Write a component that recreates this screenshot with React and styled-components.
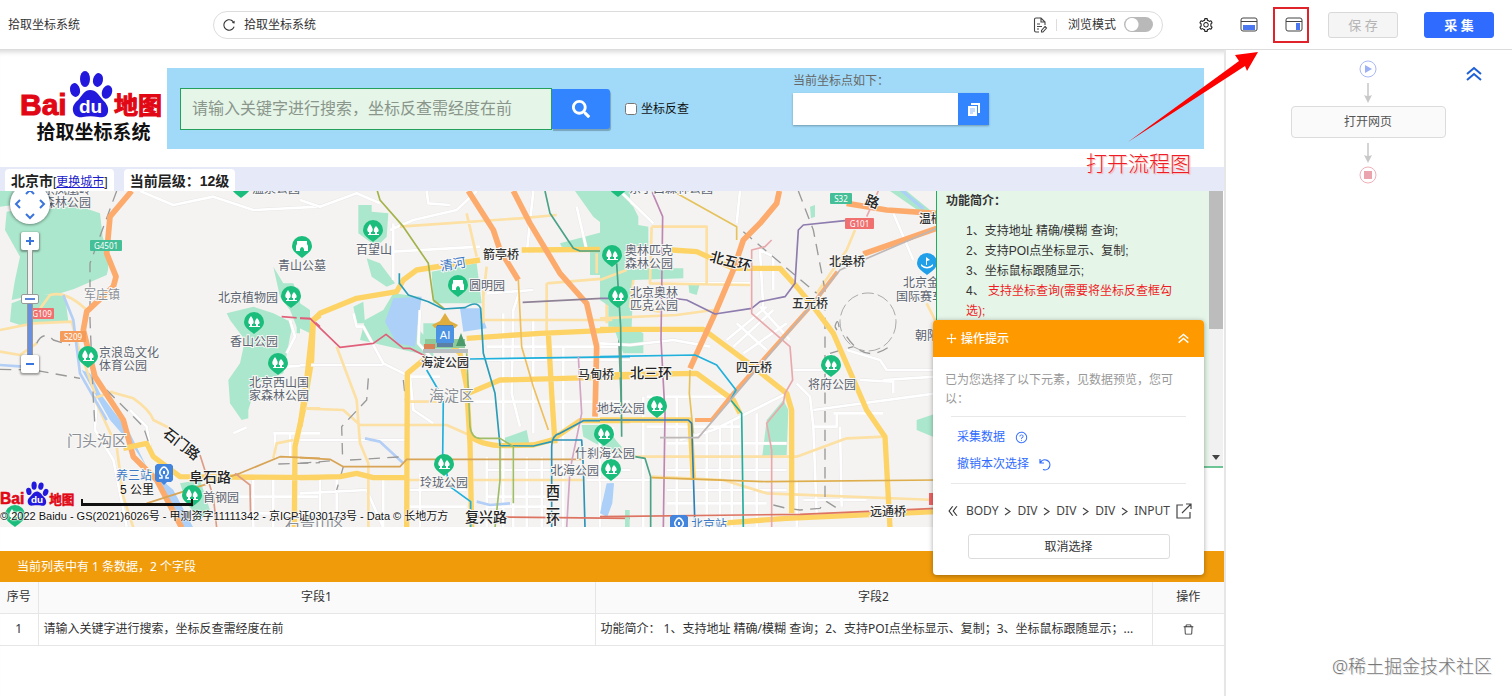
import React from "react";
import styled, { createGlobalStyle, css } from "styled-components";
import {
  AiOutlineReload,
  AiOutlineSetting,
  AiOutlineDelete,
  AiOutlineQuestionCircle,
  AiOutlineDrag,
  AiOutlineDoubleLeft,
} from "react-icons/ai";
import { FaSearch } from "react-icons/fa";

const ui = `"Noto Sans", "Noto Sans CJK SC", sans-serif`;
const arial = `"Liberation Sans", "Noto Sans CJK SC", sans-serif`;

const GlobalStyle = createGlobalStyle`
  *, *::before, *::after { box-sizing: border-box; }
  body { margin: 0; font: 12px/20px ${ui}; color: #333; background: #fff; }
  button, input { font: inherit; color: inherit; }
  button { cursor: pointer; }
`;

const Screen = styled.div`
  position: relative;
  display: flex;
  flex-direction: column;
  min-height: 100vh;
  overflow: hidden;
`;

/* ---------- header ---------- */

const Header = styled.header`
  position: relative;
  z-index: 3;
  display: flex;
  align-items: center;
  height: 50px;
  padding: 0 18px 0 8px;
  background: #fff;
  border-bottom: 1px solid #dcdcdc;
`;

const PageTitle = styled.div`
  width: 205px;
`;

const AddressBar = styled.div`
  flex: 1;
  display: flex;
  align-items: center;
  height: 28px;
  padding: 0 9px 0 8px;
  border: 1px solid #dcdcdc;
  border-radius: 14px;
`;

const PlainButton = styled.button`
  display: inline-flex;
  align-items: center;
  justify-content: center;
  padding: 0;
  border: 0;
  background: none;
`;

const Address = styled.input`
  flex: 1;
  min-width: 0;
  margin-left: 8px;
  padding: 0;
  border: 0;
  outline: 0;
  background: none;
`;

const Separator = styled.span`
  width: 1px;
  height: 12px;
  margin: 0 11px 0 8px;
  background: #ddd;
`;

const SwitchLabel = styled.label`
  display: flex;
  align-items: center;
  gap: 8px;
`;

const Switch = styled.input`
  appearance: none;
  width: 29px;
  height: 15px;
  margin: 0;
  border-radius: 8px;
  background: radial-gradient(circle at 8px 50%, #fff 6px, #b9b9b9 7px);
`;

const ToolButton = styled(PlainButton)`
  width: ${(p) => p.$w}px;
  height: 36px;
  margin-left: ${(p) => p.$gap}px;
  ${(p) => p.$marked && css`
    padding-left: 6px;
    border: 2px solid #e0222a;
  `}
`;

const ActionButton = styled.button`
  width: 70px;
  height: 26px;
  margin-left: ${(p) => (p.$primary ? 26 : 19)}px;
  padding: 0;
  border: 1px solid ${(p) => (p.$primary ? "#2f6bff" : "#d9d9d9")};
  border-radius: 3px;
  background: ${(p) => (p.$primary ? "#2f6bff" : "#f5f5f5")};
  color: ${(p) => (p.$primary ? "#fff" : "#b4b4b4")};
  font-size: 13px;
  font-weight: ${(p) => (p.$primary ? 700 : 400)};
  line-height: 24px;
`;

/* ---------- body ---------- */

const Body = styled.div`
  flex: 1;
  display: flex;
`;

const Workspace = styled.main`
  position: relative;
  flex: 1;
  min-width: 0;
  box-shadow: inset 0 6px 5px -4px #d8d8d8;
`;

const FlowPanel = styled.aside`
  position: relative;
  width: 288px;
  padding: 10px 2px 0 0;
  border-left: 2px solid #e6e6e6;
  display: flex;
  flex-direction: column;
  align-items: center;
`;

const FlowNode = styled.button`
  width: 155px;
  height: 32px;
  border: 1px solid #dcdcdc;
  border-radius: 4px;
  background: #fafafa;
  color: #555;
`;

const CollapseButton = styled(PlainButton)`
  position: absolute;
  top: 16px;
  right: 30px;
  color: #1d5fd6;
`;

const Brand = styled.section`
  display: flex;
  align-items: flex-start;
  height: 117px;
  padding: 18px 20px 0;
  font-family: ${arial};
`;

const BrandLogo = styled.h1`
  width: 147px;
  margin: 0;
  padding-top: 3px;
  font-size: 19px;
  line-height: 24px;
  font-weight: 700;
  color: #111;
  text-align: center;
  svg { display: block; margin-bottom: 2px; }
`;

const SearchBanner = styled.form`
  flex: 1;
  display: flex;
  align-items: center;
  height: 81px;
  padding: 0 13px;
  background: #a0daf8;
`;

const Keyword = styled.input`
  width: 372px;
  height: 42px;
  padding: 0 11px;
  border: 1px solid #23a05c;
  background: #e5f5e7;
  font-size: 16px;
  outline: 0;
  &::placeholder { color: #8a958c; opacity: 1; }
`;

const SearchButton = styled(PlainButton)`
  width: 58px;
  height: 40px;
  border-radius: 0 3px 3px 0;
  background: #3385ff;
  color: #fff;
  box-shadow: 1px 2px 1px rgba(0, 0, 0, 0.25);
`;

const ReverseLabel = styled.label`
  display: flex;
  align-items: center;
  gap: 4px;
  width: 168px;
  margin-left: 15px;
  color: #111;
  input { width: 12px; height: 12px; margin: 0; }
`;

const PointField = styled.div`
  align-self: flex-start;
  padding-top: 3px;
  label { display: block; height: 22px; color: #666; }
`;

const PointRow = styled.div`
  display: flex;
  width: 196px;
  height: 32px;
  box-shadow: 0 1px 2px rgba(0, 0, 0, 0.3);
  input { flex: 1; min-width: 0; border: 0; background: #fff; }
  button { width: 31px; background: #3385ff; }
`;

const StatusStrip = styled.div`
  display: flex;
  align-items: flex-end;
  gap: 10px;
  height: 24px;
  padding-left: 5px;
  background: #e5e9f8;
  font-family: ${arial};
`;

const StatusTab = styled.div`
  height: 22px;
  padding: 0 6px;
  border-radius: 4px 4px 0 0;
  background: #fff;
  font-size: 14px;
  line-height: 24px;
  font-weight: 700;
  color: #222;
  span { font-size: 12px; font-weight: 400; }
  a { color: #1a1acb; }
`;

const MapRow = styled.div`
  display: flex;
  height: 360px;
  font-family: ${arial};
`;

const MapFrame = styled.div`
  position: relative;
  flex: 1;
  height: 336px;
  overflow: hidden;
  background: #f4f3f1;
`;

const MapDrawing = styled.svg`
  display: block;
  width: 100%;
  height: 100%;
`;

const PanWheel = styled.div`
  position: absolute;
  left: 10px;
  top: -7px;
  display: grid;
  grid-template-columns: repeat(3, 1fr);
  grid-template-rows: repeat(3, 1fr);
  width: 40px;
  height: 40px;
  padding: 2px;
  border-radius: 20px;
  background: #fff;
  box-shadow: 0 0 3px 1px rgba(0, 0, 0, 0.4);
  button:nth-child(1) { grid-area: 1 / 2; }
  button:nth-child(2) { grid-area: 2 / 1; }
  button:nth-child(3) { grid-area: 2 / 3; }
  button:nth-child(4) { grid-area: 3 / 2; }
`;

const Zoomer = styled.div`
  position: absolute;
  left: 21px;
  top: 41px;
  display: flex;
  flex-direction: column;
  align-items: center;
  width: 18px;
`;

const ZoomStep = styled(PlainButton)`
  width: 18px;
  height: 18px;
  border-radius: 2px;
  background: #fff;
  box-shadow: 0 1px 2px 1px rgba(0, 0, 0, 0.35);
`;

const ZoomRange = styled.input`
  appearance: none;
  writing-mode: vertical-lr;
  direction: rtl;
  width: 18px;
  height: 105px;
  margin: 0;
  background: linear-gradient(#f4f3f1 0 50%, #6a8fdc 50%) center / 5px 100% no-repeat;
  &::-webkit-slider-runnable-track {
    width: 18px;
    background: linear-gradient(90deg, transparent 6px, #999 6px 7px, transparent 7px 11px, #999 11px 12px, transparent 12px);
  }
  &::-webkit-slider-thumb {
    appearance: none;
    width: 18px;
    height: 10px;
    border: 1px solid #999;
    border-radius: 2px;
    background: linear-gradient(#5b83d8, #5b83d8) center / 10px 2px no-repeat #fff;
  }
`;

const MapFooter = styled.div`
  position: absolute;
  left: 0;
  bottom: 2px;
  color: #111;
  line-height: 18px;
  white-space: nowrap;
  small {
    display: block;
    font-size: 11px;
    text-shadow: 0 0 2px #fff, 0 0 2px #fff, 0 0 2px #fff;
  }
`;

const FooterTop = styled.div`
  display: flex;
  align-items: flex-end;
  gap: 6px;
`;

const ScaleBar = styled.div`
  display: flex;
  flex-direction: column;
  width: 112px;
  margin-bottom: 1px;
  text-align: center;
  line-height: 17px;
  text-shadow: 0 0 2px #fff, 0 0 2px #fff;
  &::after {
    content: "";
    height: 7px;
    border: solid #111;
    border-width: 0 2px 3px;
  }
`;

const Intro = styled.section`
  display: flex;
  width: 287px;
  height: 277px;
  margin-right: 1px;
  border-left: 1px solid #1fae5d;
  border-bottom: 2px solid #6dc494;
  background: #e5f5e7;
`;

const IntroText = styled.div`
  flex: 1;
  padding: 0 28px 0 9px;
  h2 { margin: 0 0 10px; font-size: 12px; line-height: 20px; }
  ol { margin: 0; padding: 0 0 0 20px; list-style: none; }
  em { color: #ee1c25; font-style: normal; }
`;

const ScrollTrack = styled.div`
  display: flex;
  flex-direction: column;
  justify-content: space-between;
  align-items: center;
  width: 14px;
  padding-bottom: 6px;
  background: #f1f1f1;
  &::before { content: ""; width: 14px; height: 138px; background: #bcbcbc; }
  &::after { content: ""; border: 4px solid transparent; border-top: 5px solid #444; border-bottom: 0; }
`;

/* ---------- data preview ---------- */

const DataTitle = styled.div`
  height: 31px;
  padding-left: 17px;
  line-height: 31px;
  color: #fff;
  background: #f09b0a;
`;

const DataTable = styled.table`
  width: 100%;
  table-layout: fixed;
  border-collapse: collapse;
  line-height: 20px;
  th, td {
    height: 32px;
    padding: 0 5px;
    border-bottom: 1px solid #e6e6e6;
    font-weight: 400;
    text-align: left;
    vertical-align: middle;
    white-space: nowrap;
    overflow: hidden;
  }
  th + th, td + td { border-left: 1px solid #e6e6e6; }
  th { height: 31px; background: #fafafa; text-align: center; }
  td:first-child, td:last-child { text-align: center; }
  button { vertical-align: middle; }
`;

/* ---------- operation tips ---------- */

const Tips = styled.section`
  position: absolute;
  z-index: 2;
  top: 270px;
  right: 20px;
  width: 271px;
  height: 255px;
  border-radius: 4px;
  background: #fff;
  box-shadow: 0 1px 5px rgba(0, 0, 0, 0.35);
`;

const TipsHeader = styled.header`
  display: flex;
  align-items: center;
  gap: 3px;
  height: 37px;
  padding: 0 15px 0 12px;
  border-radius: 4px 4px 0 0;
  background: #ff9900;
  color: #fff;
  h2 { flex: 1; margin: 0; font-size: 12px; font-weight: 500; }
`;

const TipsMessage = styled.p`
  margin: 0;
  padding: 13px 24px 8px 12px;
  line-height: 19px;
  color: #999;
`;

const TipsActions = styled.div`
  display: flex;
  flex-direction: column;
  align-items: flex-start;
  gap: 7px;
  margin: 0 18px;
  padding: 10px 6px 9px;
  border: solid #e8e8e8;
  border-width: 1px 0;
  a { display: flex; align-items: center; gap: 10px; color: #2f6bff; text-decoration: none; }
`;

const Crumbs = styled.nav`
  display: flex;
  align-items: center;
  justify-content: space-between;
  height: 20px;
  margin: 17px 12px 13px 13px;
  a { color: #444; text-decoration: none; }
`;

const CancelButton = styled.button`
  display: block;
  width: 202px;
  height: 25px;
  margin: 0 auto;
  padding: 0;
  border: 1px solid #dcdcdc;
  border-radius: 3px;
  background: #fff;
`;

/* ---------- annotations lying over the page ---------- */

const Arrow = styled.svg`
  position: absolute;
  z-index: 5;
  top: 50px;
  right: 252px;
`;

const ArrowNote = styled.div`
  position: absolute;
  z-index: 5;
  top: 148px;
  right: 321px;
  font-size: 21px;
  line-height: 30px;
  font-weight: 300;
  color: #ee1c25;
  text-shadow: 0 0 2px #fff, 1px 1px 1px #f7a0a0;
`;

const Watermark = styled.div`
  position: absolute;
  right: 20px;
  bottom: 16px;
  font-size: 18px;
  line-height: 28px;
  font-weight: 300;
  color: #777;
  text-shadow: 1px 1px 0 #e4e4e4;
`;

/* ---------- drawings ---------- */

function BaiduLogo({ width, height }) {
  return (
    <svg width={width} height={height} viewBox="0 0 143 48" overflow="visible" role="img" aria-label="Bai du 地图">
      <g fontFamily={arial} fontWeight="700" fill="#e10714" stroke="#e10714" strokeWidth="1">
        <text x="0" y="44" fontSize="30">Bai</text>
        <text x="94" y="43" fontSize="24">地图</text>
      </g>
      <g fill="#2319dc">
        <ellipse cx="65" cy="8" rx="5" ry="8" />
        <ellipse cx="78" cy="9" rx="5" ry="7" transform="rotate(12 78 9)" />
        <ellipse cx="55" cy="19" rx="5" ry="7" transform="rotate(-12 55 19)" />
        <ellipse cx="87" cy="21" rx="5" ry="7" transform="rotate(20 87 21)" />
        <path d="M70 19c6 0 9 5 12 9 3 3 7 7 6 13-1 5-6 6-10 5-5-1-10-1-15 0-5 1-9-1-10-6-1-6 3-9 6-12 3-4 6-9 11-9z" />
      </g>
      <text x="59" y="42" fontSize="19" fontWeight="700" fontFamily={arial} fill="#fff">du</text>
    </svg>
  );
}

function PaneIcon({ side }) {
  return (
    <svg width="18" height="15" viewBox="0 0 18 15" fill="none" aria-hidden="true">
      <rect x="1" y="1" width="16" height="13" rx="2" stroke="#444" />
      <path d="M1 4.500H17" stroke="#444" />
      {side ? <rect x="11" y="6" width="4" height="7" fill="#4b78f0" /> : <rect x="3" y="8" width="12" height="5" fill="#4b78f0" />}
    </svg>
  );
}

function DocEditIcon() {
  return (
    <svg width="15" height="16" viewBox="0 0 15 16" fill="none" stroke="#444" strokeWidth="1.100" aria-hidden="true">
      <path d="M6 15H3a1.500 1.500 0 0 1-1.500-1.500v-11A1.500 1.500 0 0 1 3 1h5l4 4v3M8 1v4h4M4 7h3M4 9.500h5M4 12h2" />
      <path d="M12 9.500l1.500 1.500-3.500 4H8.500v-1.500z" />
    </svg>
  );
}

function CopyIcon() {
  return (
    <svg width="14" height="15" viewBox="0 0 14 15" aria-hidden="true">
      <path d="M4 1h9v10h-2V3H4z" fill="#fff" />
      <path d="M1 4h9v10H1z" fill="#fff" />
      <path d="M3 7h5M3 9h5M3 11h3" stroke="#8ab8ff" />
    </svg>
  );
}

function DoubleUp({ size, weight }) {
  return (
    <svg width={size} height={size} viewBox="0 0 16 16" fill="none" stroke="currentColor" strokeWidth={weight} aria-hidden="true">
      <path d="M1 8l7-6 7 6M1 14l7-6 7 6" />
    </svg>
  );
}

function UndoIcon() {
  return (
    <svg width="13" height="13" viewBox="0 0 13 13" fill="none" stroke="currentColor" strokeWidth="1.200" aria-hidden="true">
      <path d="M1 1v4h4M1.500 4.500A5 5 0 1 1 4 11.500" />
    </svg>
  );
}

function CrumbArrow() {
  return (
    <svg width="7" height="9" viewBox="0 0 7 9" fill="none" stroke="#444" strokeWidth="1.200" aria-hidden="true">
      <path d="M1 1l5 3.500L1 8" />
    </svg>
  );
}

function Chevron({ turn }) {
  return (
    <svg width="12" height="12" viewBox="0 0 12 12" fill="none" aria-hidden="true">
      <path d="M2 8l4-4 4 4" stroke="#3a74dd" strokeWidth="2" transform={`rotate(${turn} 6 6)`} />
    </svg>
  );
}

function StepGlyph({ plus }) {
  return (
    <svg width="8" height="8" viewBox="0 0 8 8" aria-hidden="true">
      <path d={plus ? "M0 4H8M4 0V8" : "M0 4H8"} stroke="#3a74dd" strokeWidth="2" />
    </svg>
  );
}

function FlowArrow() {
  return (
    <svg width="12" height="28" viewBox="0 0 12 28" aria-hidden="true">
      <path d="M6 5V20" stroke="#d4d4d4" strokeWidth="2" />
      <path d="M2 17q4 2 8 0L6 25z" fill="#c8c8c8" />
    </svg>
  );
}

function FlowEnd({ start }) {
  const color = start ? "#a9b9f5" : "#efb0b8";
  return (
    <svg width="18" height="18" viewBox="0 0 18 18" aria-hidden="true">
      <circle cx="9" cy="9" r="8" fill="#fff" stroke={color} />
      {start ? <path d="M6 5l7 4-7 4z" fill="#9db0f7" /> : <rect x="5" y="5" width="8" height="8" fill="#eba4ae" />}
    </svg>
  );
}

function OpenIcon() {
  return (
    <svg width="16" height="16" viewBox="0 0 16 16" fill="none" stroke="#444" strokeWidth="1.200" aria-hidden="true">
      <path d="M7 2H1v13h13V9M10 1h5v5M15 1L6 10" />
    </svg>
  );
}

/* Line styles of the map, in the units of a tile (3 units to a pixel). */
const kinds = {
  street: { stroke: "#fff", strokeWidth: 8 },
  pale: { stroke: "#fce0a4", strokeWidth: 8 },
  main: { stroke: "#fdd366", strokeWidth: 16 },
  highway: { stroke: "#fcab6d", strokeWidth: 17 },
  ramp: { stroke: "#fcab6d", strokeWidth: 12 },
  rail: { stroke: "#999", strokeWidth: 4, strokeDasharray: "34 22" },
  water: { stroke: "#b4cff6", strokeWidth: 8 },
};

const tiles = [
  {
    x: 0,
    parks: "M0 33H40V75L0 80zM20 95L200 65 300 100 308 170Q335 250 320 285L250 315Q180 350 100 345L35 360 45 300 60 230 15 150zM35 370L100 345 195 345 205 425 60 435 30 425zM820 260L850 310 880 310 900 370 930 390V460L890 440 870 390 840 350zM680 400L760 380 820 400 880 430 870 470 850 580 770 610 745 690V715L725 720 690 670 685 600 720 550 735 480 690 420zM540 910L600 900 630 990 600 1020 560 970z",
    lakes: "M245 570L270 580 300 640 345 700 385 750 440 860 520 930 580 1043H545L480 920 400 800 330 720 290 650z",
    roads: [
      ["street", "M420 33L520 75 640 50 760 90 960 80M820 760H960M825 835V760M870 760V830M290 660L285 750 340 840 380 1040M870 420L885 470 860 520M700 760L740 742M390 690L440 740 450 800M860 560L960 555M760 900V1043M820 900V1043M700 950H960M700 1000H960"],
      ["pale", "M0 450L100 430 215 425 235 500 285 640M0 515L60 525 110 490M110 400L150 345Q200 330 265 395M330 635L400 655Q450 690 460 720L520 750M280 655L340 635M285 660L350 800 370 950 400 1043M820 835L830 790 880 780M920 685H960"],
      ["water", "M190 345L220 420 240 580 320 720M0 555L70 560"],
      ["rail", "M350 33L270 250 270 420 280 660 285 740M0 568L100 570 240 595M110 490Q130 450 160 480L210 495M320 630L430 740 450 800M835 852L960 848"],
      ["highway", "M395 33L330 110 320 220 348 290 340 320 260 395 250 450 285 590 370 720 400 830 470 900 545 1043"],
      ["main", "M370 805L440 790 460 830 540 890 960 893M960 405L940 420 935 540 910 690 885 800 883 1043"],
    ],
    lines: [
      ["#d8a455", "M440 970L720 880 840 830 960 835"],
      ["#dd9c86", "M600 825L640 950 650 1043M705 880L750 915 752 1020"],
      ["#e0607a", "M845 410L935 417 960 440"],
    ],
  },
  {
    x: 300,
    parks: "M175 75H215V95L265 100 260 170 230 200 175 160zM200 235L240 250 285 310 260 320 215 290zM395 275L530 250 545 370 400 370zM160 380L190 365 195 430 170 430zM195 420L250 390 280 340 360 350 350 440 400 500V530L180 480zM370 430h90v80h-90zM825 33H990V440H925V285H870V210L785 200 780 190 930 150 880 110zM610 775L680 750 690 800 600 795zM845 735H905L965 800 960 830 850 770zM0 330V460H-10V320z",
    lakes: "M280 355L365 350 345 500 290 490 255 425zM480 385h60l20 60-70 10zM930 910h12l-5 60-15 40-20-30z",
    roads: [
      ["street", "M0 60L60 80 170 40 240 70M280 130V300M270 150L340 120 470 90 530 33M280 215L540 200M160 400L170 440 190 440 250 550 330 590 420 590M360 390L355 490 400 540M0 555L250 555M330 590L340 690 400 730M660 330L640 390 635 640 660 740M700 33L680 220M830 80L860 210M560 340L700 330M610 400V1043M700 420V760M790 500V1043M560 500H990M560 540H990M500 665H990M560 870H990M0 780H320M60 900V1043M110 900V1043M250 900V1043M330 930H500M330 980H500M360 880V1043M560 830V1043M640 830V1043M680 830V1043M725 830V1043M560 950H740M560 980H740M860 900H990M900 740V1043M940 740V900M380 33L385 70 450 75M0 940L200 930 250 1043"],
      ["pale", "M300 140L660 115 770 105M500 100L530 230M550 300V430M0 685L130 690 180 735 440 735 520 770M110 500L170 660 180 790 205 850V1043M540 420H990M740 310L920 295V430M740 310V460M330 665H440M320 900H510M520 900H850M550 350L560 260M890 220V280"],
      ["water", "M195 775L240 785 310 850M530 965L570 975 630 970"],
      ["rail", "M205 595L200 660 125 740 128 840M310 600L320 690M0 850L100 842M150 840L310 830M130 860L110 930"],
      ["main", "M0 740L20 600 40 420 60 400 170 355 290 335 310 300 350 270 540 240M665 210L915 208M320 1043L322 580 370 540M500 475L720 460 990 448M505 640L600 600 990 590M745 460L755 640 765 790M0 893L120 890 170 880 220 893H320M515 1043L510 790 500 620 480 520 460 500M510 760Q520 790 600 797L700 795 755 780 840 722H990"],
      ["highway", "M505 33L580 150 600 210 655 300M640 33L690 130 780 280 860 370 890 500 885 710"],
    ],
    lines: [
      ["#eebf5c", "M655 300L665 500 700 620 745 750"],
      ["#a5b24a", "M232 33L240 60 310 140 385 250 400 360 435 388"],
      ["#2b9cb6", "M298 280V310L325 345 385 365 430 387 495 383Q530 360 542 385L550 520 585 640 600 797 700 798 755 785"],
      ["#e0607a", "M0 415L30 415 120 502 220 490 258 463 310 505 330 505 380 530"],
      ["#1fb0dc", "M380 570L415 630 430 650 428 830 450 920 512 965V1043M510 537L990 530"],
      ["#4aa287", "M735 33L750 100 820 205 840 213H920"],
      ["#8f8296", "M668 367L950 353"],
      ["#69a08a", "M950 250L955 440 965 700"],
      ["#d8a455", "M0 833L90 838 130 860 300 860 320 838H850"],
      ["#9fbd66", "M500 520L510 740Q515 775 540 775H600L640 800V970M600 800V900L585 1043"],
      ["#d2a6c4", "M835 530L845 700 810 870 800 1043"],
      ["#2f93b8", "M755 1043V800Q755 765 780 760L850 722H990M755 780H845L850 860 855 1043"],
      ["#dd7462", "M510 1010L990 1015"],
    ],
  },
  {
    x: 600,
    parks: "M0 33H50L100 80 115 110V135L145 140V205H70L60 265H250V295L100 300 95 440 130 460V520H70L40 440 30 380 0 360zM265 310H300L290 345 268 338zM630 80l15-5v35l-12 5zM500 720L550 660 565 690 560 825 487 828zM950 720L1010 700V775L950 750zM870 33H920L990 90 960 95zM0 735L20 735 65 810 40 810 0 770zM75 990h14v53h-14z",
    lakes: "M20 910h20l-5 60-15 40-20-10zM900 33h14l60 50-8 6z",
    roads: [
      ["street", "M420 33L410 130M60 33L160 130M160 310H450M0 490L90 495 220 480 330 500M380 480L500 380M400 500L520 390M430 520L560 430M480 380L570 480M410 430L500 510M490 390L480 210 520 230V330M580 570H680M640 690L1010 640M700 700H850M780 600L880 605V640M850 600L1010 590M590 610L630 650 640 740 650 1000M560 640L340 750 240 780M720 740L725 980M640 740H710V700M230 650V1043M130 650V1043M320 760V1043M360 740V1043M395 720V1043M470 700V1043M140 650H400M140 740H420M200 790H560M200 870H560M200 930H560M200 970H500M0 900H150M880 100L940 240M740 510L840 540 860 570 1010 570M690 520L680 600M590 900V1043M610 960H800"],
      ["pale", "M155 140H320V310M155 140L150 310 450 315M100 300L90 380 180 395M0 415L230 405 340 390M100 830H590L740 775 855 770M155 890L370 900 500 940 1010 960M765 150L740 210 650 340M0 300L80 270M980 370L1010 430"],
      ["rail", "M595 33L640 150 675 330V960M430 155L650 340M740 470Q800 560 880 490M520 975L560 985 600 990 660 985 680 965 720 990M705 440q8-30 12 0t-12 0M690 520L760 500"],
      ["main", "M215 210L290 215 400 265H540L590 320 640 380 700 460 800 690 855 770 870 1043M0 448H310L440 545 560 640 575 690V1000M0 585L290 580 400 660 420 700M0 720H270L280 900M360 1030L560 1015 1010 995"],
      ["highway", "M538 33L530 70 480 130 430 180 400 270 345 400 270 565M740 70L860 90 1010 100M1010 145L790 222"],
      ["ramp", "M285 720L335 720 400 640 640 370 712 275"],
    ],
    lines: [
      ["#e5c25c", "M230 40L410 140V180M270 570L268 640 280 760"],
      ["#bd87b2", "M155 33L188 110 183 480 195 700 190 1043"],
      ["#8e7cae", "M735 122L610 135 595 150 585 310 555 350 480 365 455 385 345 402 260 360 180 350H95M0 355H50"],
      ["#e8a9ac", "M515 180L495 200 455 210V400L570 500 578 600 555 640 550 670 500 730 515 810V1043M835 33L800 110"],
      ["#1fb0dc", "M0 530L285 525 350 555 408 630 392 660"],
      ["#24ac9c", "M392 660L425 700 430 1043"],
      ["#2d7fb8", "M0 720H265L275 730 285 1043"],
      ["#bdb7b8", "M1010 145L720 270 640 370 295 773H180"],
      ["#dd7462", "M0 1010L600 1003 1010 985"],
      ["#dfae4c", "M155 893L500 905 1010 900"],
      ["#4aa287", "M105 830L135 835 152 890V1043M50 250L62 440 65 770"],
    ],
  },
];

const pins = [
  [241, -5], [618, -6], [302, 55, "gate"], [291, 105], [254, 131], [278, 172], [88, 165], [192, 304], [15, 324],
  [373, 39], [458, 94, "gate"], [612, 64], [618, 105], [444, 273], [604, 243], [611, 278], [657, 215], [831, 174],
  [927, 72, "boat"],
];

const labels = [
  ["森林公园", 43, 16], ["京凤凰岭", 43, 3], ["温泉公园", 252, 2], ["青山公墓", 278, 79], ["北京植物园", 218, 111],
  ["香山公园", 230, 155], ["北京西山国", 249, 196], ["家森林公园", 249, 209], ["京浪岛文化", 99, 166],
  ["体育公园", 99, 179], ["军庄镇", 84, 108, "soft"], ["门头沟区", 67, 255, "area"], ["养三站", 116, 289, "blue"],
  ["首钢园", 203, 311], ["百望山", 356, 63], ["圆明园", 469, 99], ["箭亭桥", 483, 68, "dark"],
  ["海淀公园", 421, 176, "dark"], ["海淀区", 429, 210, "area"], ["玲珑公园", 420, 296], ["马甸桥", 578, 188, "dark"],
  ["地坛公园", 597, 222], ["什刹海公园", 575, 267], ["北海公园", 551, 284], ["奥林匹克", 625, 64],
  ["森林公园", 625, 77], ["北京奥林", 630, 106], ["匹克公园", 630, 119], ["北五环", 709, 70, "road", 14],
  ["北皋桥", 829, 75, "dark"], ["五元桥", 792, 117, "dark"], ["四元桥", 736, 181, "dark"], ["北三环", 630, 187, "road"],
  ["将府公园", 808, 198], ["北京金港", 903, 96], ["国际赛车场", 896, 110], ["朝阳区", 915, 149], ["温榆河", 919, 32, "dark"],
  ["远通桥", 870, 325, "dark"], ["北京站", 691, 338, "blue"], ["复兴路", 465, 331, "road"], ["阜石路", 189, 291, "road"],
  ["石门路", 162, 244, "road", 38], ["东小口森林公园", 629, 2], ["石景山区", 285, 338, "area"],
  ["西", 546, 305, "road"], ["二", 546, 318, "road"], ["环", 546, 333, "road"], ["路", 864, 13, "road", 20],
  ["清河", 441, 80, "river", -10],
];

const labelLooks = {
  park: { fontSize: 12, fill: "#5c6370" },
  soft: { fontSize: 12, fill: "#8b8f96" },
  area: { fontSize: 15, fill: "#8b8f96" },
  dark: { fontSize: 12, fill: "#333", fontWeight: 500 },
  road: { fontSize: 14, fill: "#222", fontWeight: 500 },
  blue: { fontSize: 12, fill: "#3d78c4" },
  river: { fontSize: 13, fill: "#3d78c4" },
};

const shields = [
  ["G4501", 90, 49, 32, "#45bf97"], ["G109", 30, 117, 24, "#f06f6f"], ["S209", 60, 140, 26, "#f59c5b"],
  ["S32", 830, 2, 22, "#45bf97"], ["G101", 845, 27, 29, "#f06f6f"],
];

function Pin({ x, y, kind }) {
  return (
    <g transform={`translate(${x} ${y})`}>
      <path d="M-10 0a10 10 0 1 1 20 0c0 5-5 8-10 12-5-4-10-7-10-12z" fill={kind === "boat" ? "#219fe8" : "#1bbd7c"} />
      {kind === "gate" && <path d="M-5-5H5v3l1 2v5H2V3Q0-1-2 3v2h-4V0l1-2z" fill="#fff" />}
      {kind === "boat" && <path d="M-6 1q6 6 12 0v2q-6 5-12 0zM-1-6l4 3-3 1v4h-1z" fill="#fff" />}
      {!kind && <path d="M-3-6q4 5 2 8h-1v2h3v1h-6v-1h1V2h-1q-2-3 2-8zM3-4q4 4 2 6h-1v2h2v1H1v-1h1V2H1q-1-3 2-6z" fill="#fff" />}
    </g>
  );
}

function Station({ x, y }) {
  return (
    <g transform={`translate(${x} ${y})`}>
      <path d="M-7-10H7l2 2V6L7 8H3L0 11l-3-3h-4L-9 6V-8z" fill="#4384dd" />
      <path d="M-5 4h3V2q-3-2-2-5 2-4 4-4t4 4q1 3-2 5v2h3" fill="none" stroke="#fff" strokeWidth="1.500" />
      <path d="M-1-3h2v3h-2z" fill="#fff" />
    </g>
  );
}

function CityMap() {
  return (
    <MapDrawing aria-label="北京市地图">
      {tiles.map((tile) => (
        <g key={tile.x} transform={`translate(${tile.x} -11) scale(${1 / 3})`} strokeLinejoin="round" fill="none">
          <path d={tile.parks} fill="#abe7cc" />
          <path d={tile.lakes} fill="#acd0f8" />
          <path d={tile.roads[0][1]} stroke="#e6e4e4" strokeWidth="10" />
          {tile.roads.map(([kind, d]) => <path key={kind} d={d} {...kinds[kind]} />)}
          {tile.lines.map(([color, d]) => <path key={d} d={d} stroke={color} strokeWidth="5" />)}
        </g>
      ))}
      <ellipse cx="868" cy="131" rx="28" ry="29" fill="none" stroke="#aaa" strokeWidth="1" strokeDasharray="12 4" />
      <g>
        <path d="M423 158h45v4h-45z" fill="#b9bec0" />
        <path d="M425 148h40v9h-40z" fill="#8fca9a" />
        <path d="M424 153h11v5h-11z" fill="#d68156" />
        <path d="M445 122l5 8 8 4-3 3h-20l-3-3 8-4z" fill="#e0ae3f" />
        <path d="M461 142l5 13h-10z" fill="#4b9a6a" />
        <path d="M437 134h16v22h-16z" fill="#5b7fa5" />
        <rect x="436" y="135" width="18" height="17" rx="1" fill="#4c93e3" />
        <text x="445" y="148" fontSize="11" textAnchor="middle" fill="#fff" fontFamily={arial}>AI</text>
      </g>
      {shields.map(([name, x, y, w, fill]) => (
        <g key={name}>
          <rect x={x} y={y} width={w} height="11" rx="1" fill={fill} />
          <text x={x + w / 2} y={y + 9} fontSize="8" textAnchor="middle" fill="#fff" fontFamily={ui}>{name}</text>
        </g>
      ))}
      {pins.map(([x, y, kind]) => <Pin key={`${x} ${y}`} x={x} y={y} kind={kind} />)}
      <Station x={164} y={283} />
      <Station x={679} y={334} />
      <rect x="929" y="302" width="12" height="12" fill="#f06363" />
      <g stroke="#f8f8f6" strokeWidth="2" paintOrder="stroke" fontFamily={ui}>
        {labels.map(([text, x, y, look = "park", turn = 0]) => (
          <text key={`${x} ${y}`} x={x} y={y} transform={`rotate(${turn} ${x} ${y})`} {...labelLooks[look]}>{text}</text>
        ))}
      </g>
    </MapDrawing>
  );
}

const pans = [["上移", 0], ["左移", -90], ["右移", 90], ["下移", 180]];
const path = ["BODY", "DIV", "DIV", "DIV", "INPUT"];

export default function App() {
  return (
    <Screen>
      <GlobalStyle />
      <Header>
        <PageTitle>拾取坐标系统</PageTitle>
        <AddressBar>
          <PlainButton aria-label="刷新"><AiOutlineReload size={14} /></PlainButton>
          <Address aria-label="网址" defaultValue="拾取坐标系统" />
          <PlainButton aria-label="编辑"><DocEditIcon /></PlainButton>
          <Separator />
          <SwitchLabel>浏览模式<Switch type="checkbox" role="switch" /></SwitchLabel>
        </AddressBar>
        <ToolButton $w={16} $gap={35} aria-label="设置"><AiOutlineSetting size={16} color="#222" /></ToolButton>
        <ToolButton $w={18} $gap={26} aria-label="数据预览"><PaneIcon /></ToolButton>
        <ToolButton $w={36} $gap={15} $marked aria-label="流程图"><PaneIcon side /></ToolButton>
        <ActionButton>保 存</ActionButton>
        <ActionButton $primary>采 集</ActionButton>
      </Header>

      <Body>
        <Workspace>
          <Brand>
            <BrandLogo><BaiduLogo width={143} height={48} />拾取坐标系统</BrandLogo>
            <SearchBanner onSubmit={(e) => e.preventDefault()}>
              <Keyword aria-label="关键字" placeholder="请输入关键字进行搜索，坐标反查需经度在前" />
              <SearchButton aria-label="搜索"><FaSearch size={18} /></SearchButton>
              <ReverseLabel><input type="checkbox" />坐标反查</ReverseLabel>
              <PointField>
                <label htmlFor="point">当前坐标点如下：</label>
                <PointRow>
                  <input id="point" />
                  <PlainButton type="button" aria-label="复制"><CopyIcon /></PlainButton>
                </PointRow>
              </PointField>
            </SearchBanner>
          </Brand>

          <StatusStrip>
            <StatusTab>北京市<span>[<a href="#city">更换城市</a>]</span></StatusTab>
            <StatusTab>当前层级：12级</StatusTab>
          </StatusStrip>

          <MapRow>
            <MapFrame>
              <CityMap />
              <PanWheel>
                {pans.map(([name, turn]) => (
                  <PlainButton key={name} aria-label={name}><Chevron turn={turn} /></PlainButton>
                ))}
              </PanWheel>
              <Zoomer>
                <ZoomStep aria-label="放大"><StepGlyph plus /></ZoomStep>
                <ZoomRange type="range" aria-label="缩放" min="0" max="100" defaultValue="54" />
                <ZoomStep aria-label="缩小"><StepGlyph /></ZoomStep>
              </Zoomer>
              <MapFooter>
                <FooterTop>
                  <BaiduLogo width={75} height={26} />
                  <ScaleBar>5 公里</ScaleBar>
                </FooterTop>
                <small>© 2022 Baidu - GS(2021)6026号 - 甲测资字11111342 - 京ICP证030173号 - Data © 长地万方</small>
              </MapFooter>
            </MapFrame>
            <Intro>
              <IntroText>
                <h2>功能简介：</h2>
                <ol>
                  <li>1、支持地址 精确/模糊 查询;</li>
                  <li>2、支持POI点坐标显示、复制;</li>
                  <li>3、坐标鼠标跟随显示;</li>
                  <li>4、 <em>支持坐标查询(需要将坐标反查框勾选);</em></li>
                </ol>
              </IntroText>
              <ScrollTrack />
            </Intro>
          </MapRow>

          <DataTitle>当前列表中有 1 条数据，2 个字段</DataTitle>
          <DataTable>
            <colgroup>
              <col style={{ width: 38 }} />
              <col />
              <col />
              <col style={{ width: 72 }} />
            </colgroup>
            <thead>
              <tr><th>序号</th><th>字段1</th><th>字段2</th><th>操作</th></tr>
            </thead>
            <tbody>
              <tr>
                <td>1</td>
                <td>请输入关键字进行搜索，坐标反查需经度在前</td>
                <td>功能简介： 1、支持地址 精确/模糊 查询；2、支持POI点坐标显示、复制；3、坐标鼠标跟随显示；...</td>
                <td><PlainButton aria-label="删除"><AiOutlineDelete size={13} /></PlainButton></td>
              </tr>
            </tbody>
          </DataTable>

          <Tips>
            <TipsHeader>
              <AiOutlineDrag size={13} />
              <h2>操作提示</h2>
              <PlainButton aria-label="收起"><DoubleUp size={11} weight={2} /></PlainButton>
            </TipsHeader>
            <TipsMessage>已为您选择了以下元素，见数据预览，您可以：</TipsMessage>
            <TipsActions>
              <a href="#collect">采集数据 <AiOutlineQuestionCircle size={13} /></a>
              <a href="#undo">撤销本次选择 <UndoIcon /></a>
            </TipsActions>
            <Crumbs>
              <AiOutlineDoubleLeft size={14} />
              {path.map((tag, i) => (
                <React.Fragment key={i}>
                  {i > 0 && <CrumbArrow />}
                  <a href={`#node-${i}`}>{tag}</a>
                </React.Fragment>
              ))}
              <PlainButton aria-label="打开"><OpenIcon /></PlainButton>
            </Crumbs>
            <CancelButton>取消选择</CancelButton>
          </Tips>
        </Workspace>

        <FlowPanel>
          <FlowEnd start />
          <FlowArrow />
          <FlowNode>打开网页</FlowNode>
          <FlowArrow />
          <FlowEnd />
          <CollapseButton aria-label="收起流程图"><DoubleUp size={16} weight={2} /></CollapseButton>
        </FlowPanel>
      </Body>

      <Arrow width="132" height="94" viewBox="0 0 132 94" aria-hidden="true">
        <path d="M0 92L111 11 107 5 130 2 119 21 117 16z" fill="#fd0000" />
      </Arrow>
      <ArrowNote>打开流程图</ArrowNote>
      <Watermark>@稀土掘金技术社区</Watermark>
    </Screen>
  );
}
